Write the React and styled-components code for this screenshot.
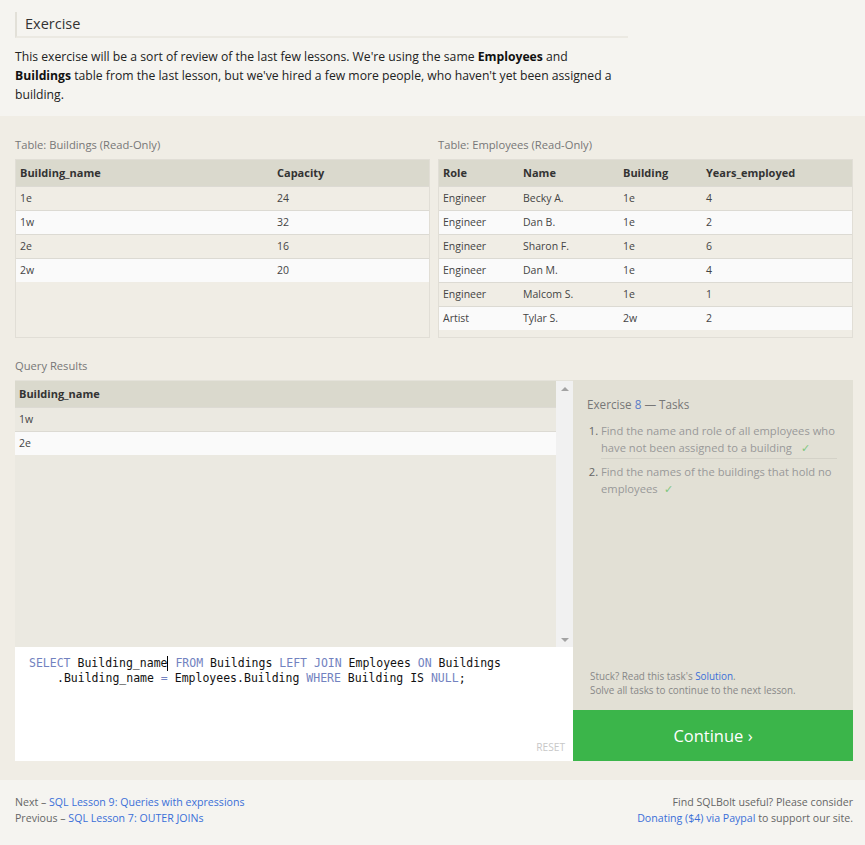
import React from "react";
import styled, { createGlobalStyle } from "styled-components";

const SANS = `"Open Sans", "Noto Sans", sans-serif`;
const MONO = `"DejaVu Sans Mono", "Liberation Mono", monospace`;

const GlobalStyle = createGlobalStyle`
  html, body {
    margin: 0;
    padding: 0;
    background: #f0ede5;
    font-family: ${SANS};
  }
  * { box-sizing: border-box; }
`;

const Page = styled.div`
  width: 865px;
  min-height: 845px;
  display: flex;
  flex-direction: column;
`;

const Intro = styled.section`
  background: #f5f4f0;
  height: 116px;
  padding: 12px 15px 0 15px;
`;

const Heading = styled.h2`
  margin: 0;
  width: 613px;
  height: 26px;
  padding-left: 8px;
  border-left: 2px solid #e2e0d8;
  border-bottom: 2px solid #ebe9e2;
  font-size: 14.5px;
  font-weight: normal;
  line-height: 24px;
  color: #333;
`;

const Lead = styled.p`
  margin: 9px 0 0 0;
  width: 640px;
  font-size: 12.2px;
  line-height: 19px;
  color: #222;

  b { color: #111; }
`;

const Main = styled.main`
  flex: 1;
  background: #f0ede5;
  padding: 21px 12px 18px 15px;
`;

const TablesRow = styled.div`
  display: grid;
  grid-template-columns: 415px 415px;
  gap: 8px;
`;

const Label = styled.div`
  font-size: 11.2px;
  line-height: 16px;
  color: #777;
  margin-bottom: 6px;
`;

const TableBox = styled.div`
  height: 179px;
  border: 1px solid #e1ded6;
  background: #f0ede5;
`;

const Table = styled.table`
  width: 100%;
  border-collapse: collapse;
`;

const Th = styled.th`
  height: 26px;
  padding: 0 4px;
  background: #dad9cd;
  text-align: left;
  font-size: 11px;
  font-weight: bold;
  color: #333;
  width: ${(p) => p.$w || "auto"};
`;

const Tr = styled.tr`
  background: ${(p) => (p.$odd ? "#fafafa" : "transparent")};
`;

const Td = styled.td`
  height: 24px;
  padding: 0 4px;
  border-top: 1px solid #dcdad3;
  font-size: 10.5px;
  color: #444;
`;

const QueryLabel = styled(Label)`
  margin-top: 20px;
`;

const Workspace = styled.div`
  display: grid;
  grid-template-columns: 558px 280px;
`;

const LeftCol = styled.div`
  display: flex;
  flex-direction: column;
`;

const Results = styled.div`
  height: 267px;
  display: flex;
  background: #ebe9e1;
  border-top: 1px solid #e4e2da;
`;

const ResultsBody = styled.div`
  flex: 1;
`;

const Scrollbar = styled.div`
  width: 17px;
  background: #f1f1f1;
  display: flex;
  flex-direction: column;
  justify-content: space-between;
  align-items: center;
  padding: 6px 0 5px;
`;

const Arrow = styled.div`
  width: 0;
  height: 0;
  border-left: 4px solid transparent;
  border-right: 4px solid transparent;
  ${(p) =>
    p.$down
      ? "border-top: 4px solid #a3a3a3;"
      : "border-bottom: 4px solid #a3a3a3;"}
`;

const Editor = styled.div`
  height: 114px;
  background: #fff;
  padding: 9px 8px 6px 14px;
  display: flex;
  flex-direction: column;
  font-family: ${MONO};
  font-size: 11.5px;
  line-height: 15px;
  color: #111;
`;

const CodeLine = styled.div`
  padding-left: ${(p) => (p.$indent ? "28px" : "0")};
  white-space: pre;
`;

const Kw = styled.span`
  color: #7282c0;
`;

const Caret = styled.span`
  display: inline-block;
  width: 0;
  height: 15px;
  border-left: 1px solid #000;
  vertical-align: top;
`;

const Reset = styled.div`
  margin-top: auto;
  align-self: flex-end;
  font-family: ${SANS};
  font-size: 10.2px;
  color: #c8c8c8;
`;

const RightCol = styled.div`
  display: flex;
  flex-direction: column;
`;

const Tasks = styled.div`
  height: 330px;
  background: #e2e0d5;
  padding: 16px 16px 13px 14px;
  display: flex;
  flex-direction: column;
`;

const TasksTitle = styled.div`
  font-size: 11.7px;
  line-height: 16px;
  color: #777;

  span { color: #5a7cc8; }
`;

const TaskList = styled.ol`
  margin: 10px 0 0 0;
  padding: 0 0 0 14px;
`;

const Task = styled.li`
  font-size: 11.2px;
  line-height: 17px;
  color: #999;
  padding: 0 0 2px;
  border-bottom: ${(p) => (p.$last ? "none" : "1px solid #d4d2c8")};
  margin-bottom: 4px;

  &::marker { color: #666; }
`;

const Check = styled.span`
  display: inline-block;
  color: #7fc77f;
  margin-left: 6px;
  font-size: 10.5px;
  line-height: 12px;
`;

const Help = styled.div`
  margin-top: auto;
  font-size: 9.9px;
  line-height: 14px;
  color: #888;
  padding-left: 3px;
`;

const Link = styled.a`
  color: #3a6fd8;
  text-decoration: none;
`;

const ContinueButton = styled.button`
  height: 51px;
  border: none;
  background: #3bb54a;
  color: #fff;
  font-family: ${SANS};
  font-size: 16.5px;
  cursor: pointer;
`;

const Footer = styled.footer`
  height: 65px;
  background: #f5f4f0;
  padding: 14px 12px 0 15px;
  display: flex;
  justify-content: space-between;
  font-size: 10.6px;
  line-height: 16px;
  color: #666;
`;

const FooterRight = styled.div`
  text-align: right;
`;

const buildings = [
  ["1e", 24],
  ["1w", 32],
  ["2e", 16],
  ["2w", 20],
];

const employees = [
  ["Engineer", "Becky A.", "1e", 4],
  ["Engineer", "Dan B.", "1e", 2],
  ["Engineer", "Sharon F.", "1e", 6],
  ["Engineer", "Dan M.", "1e", 4],
  ["Engineer", "Malcom S.", "1e", 1],
  ["Artist", "Tylar S.", "2w", 2],
];

export default function App() {
  return (
    <Page>
      <GlobalStyle />
      <Intro>
        <Heading>Exercise</Heading>
        <Lead>
          This exercise will be a sort of review of the last few lessons. We're
          using the same <b>Employees</b> and
          <br />
          <b>Buildings</b> table from the last lesson, but we've hired a few
          more people, who haven't yet been assigned a
          <br />
          building.
        </Lead>
      </Intro>

      <Main>
        <TablesRow>
          <div>
            <Label>Table: Buildings (Read-Only)</Label>
            <TableBox>
              <Table>
                <thead>
                  <tr>
                    <Th $w="257px">Building_name</Th>
                    <Th>Capacity</Th>
                  </tr>
                </thead>
                <tbody>
                  {buildings.map((row, i) => (
                    <Tr key={row[0]} $odd={i % 2 === 1}>
                      {row.map((c, j) => (
                        <Td key={j}>{c}</Td>
                      ))}
                    </Tr>
                  ))}
                </tbody>
              </Table>
            </TableBox>
          </div>
          <div>
            <Label>Table: Employees (Read-Only)</Label>
            <TableBox>
              <Table>
                <thead>
                  <tr>
                    <Th $w="80px">Role</Th>
                    <Th $w="100px">Name</Th>
                    <Th $w="83px">Building</Th>
                    <Th>Years_employed</Th>
                  </tr>
                </thead>
                <tbody>
                  {employees.map((row, i) => (
                    <Tr key={i} $odd={i % 2 === 1}>
                      {row.map((c, j) => (
                        <Td key={j}>{c}</Td>
                      ))}
                    </Tr>
                  ))}
                </tbody>
              </Table>
            </TableBox>
          </div>
        </TablesRow>

        <QueryLabel>Query Results</QueryLabel>
        <Workspace>
          <LeftCol>
            <Results>
              <ResultsBody>
                <Table>
                  <thead>
                    <tr>
                      <Th>Building_name</Th>
                    </tr>
                  </thead>
                  <tbody>
                    <Tr>
                      <Td>1w</Td>
                    </Tr>
                    <Tr $odd>
                      <Td>2e</Td>
                    </Tr>
                  </tbody>
                </Table>
              </ResultsBody>
              <Scrollbar>
                <Arrow />
                <Arrow $down />
              </Scrollbar>
            </Results>
            <Editor>
              <CodeLine>
                <Kw>SELECT</Kw> Building_name<Caret /> <Kw>FROM</Kw> Buildings{" "}
                <Kw>LEFT</Kw> <Kw>JOIN</Kw> Employees <Kw>ON</Kw> Buildings
              </CodeLine>
              <CodeLine $indent>
                .Building_name <Kw>=</Kw> Employees.Building <Kw>WHERE</Kw>{" "}
                Building IS <Kw>NULL</Kw>;
              </CodeLine>
              <Reset>RESET</Reset>
            </Editor>
          </LeftCol>
          <RightCol>
            <Tasks>
              <TasksTitle>
                Exercise <span>8</span> — Tasks
              </TasksTitle>
              <TaskList>
                <Task>
                  Find the name and role of all employees who have not been
                  assigned to a building <Check>✓</Check>
                </Task>
                <Task $last>
                  Find the names of the buildings that hold no employees
                  <Check>✓</Check>
                </Task>
              </TaskList>
              <Help>
                Stuck? Read this task's <Link href="#">Solution</Link>.
                <br />
                Solve all tasks to continue to the next lesson.
              </Help>
            </Tasks>
            <ContinueButton>Continue ›</ContinueButton>
          </RightCol>
        </Workspace>
      </Main>

      <Footer>
        <div>
          Next – <Link href="#">SQL Lesson 9: Queries with expressions</Link>
          <br />
          Previous – <Link href="#">SQL Lesson 7: OUTER JOINs</Link>
        </div>
        <FooterRight>
          Find SQLBolt useful? Please consider
          <br />
          <Link href="#">Donating ($4) via Paypal</Link> to support our site.
        </FooterRight>
      </Footer>
    </Page>
  );
}
